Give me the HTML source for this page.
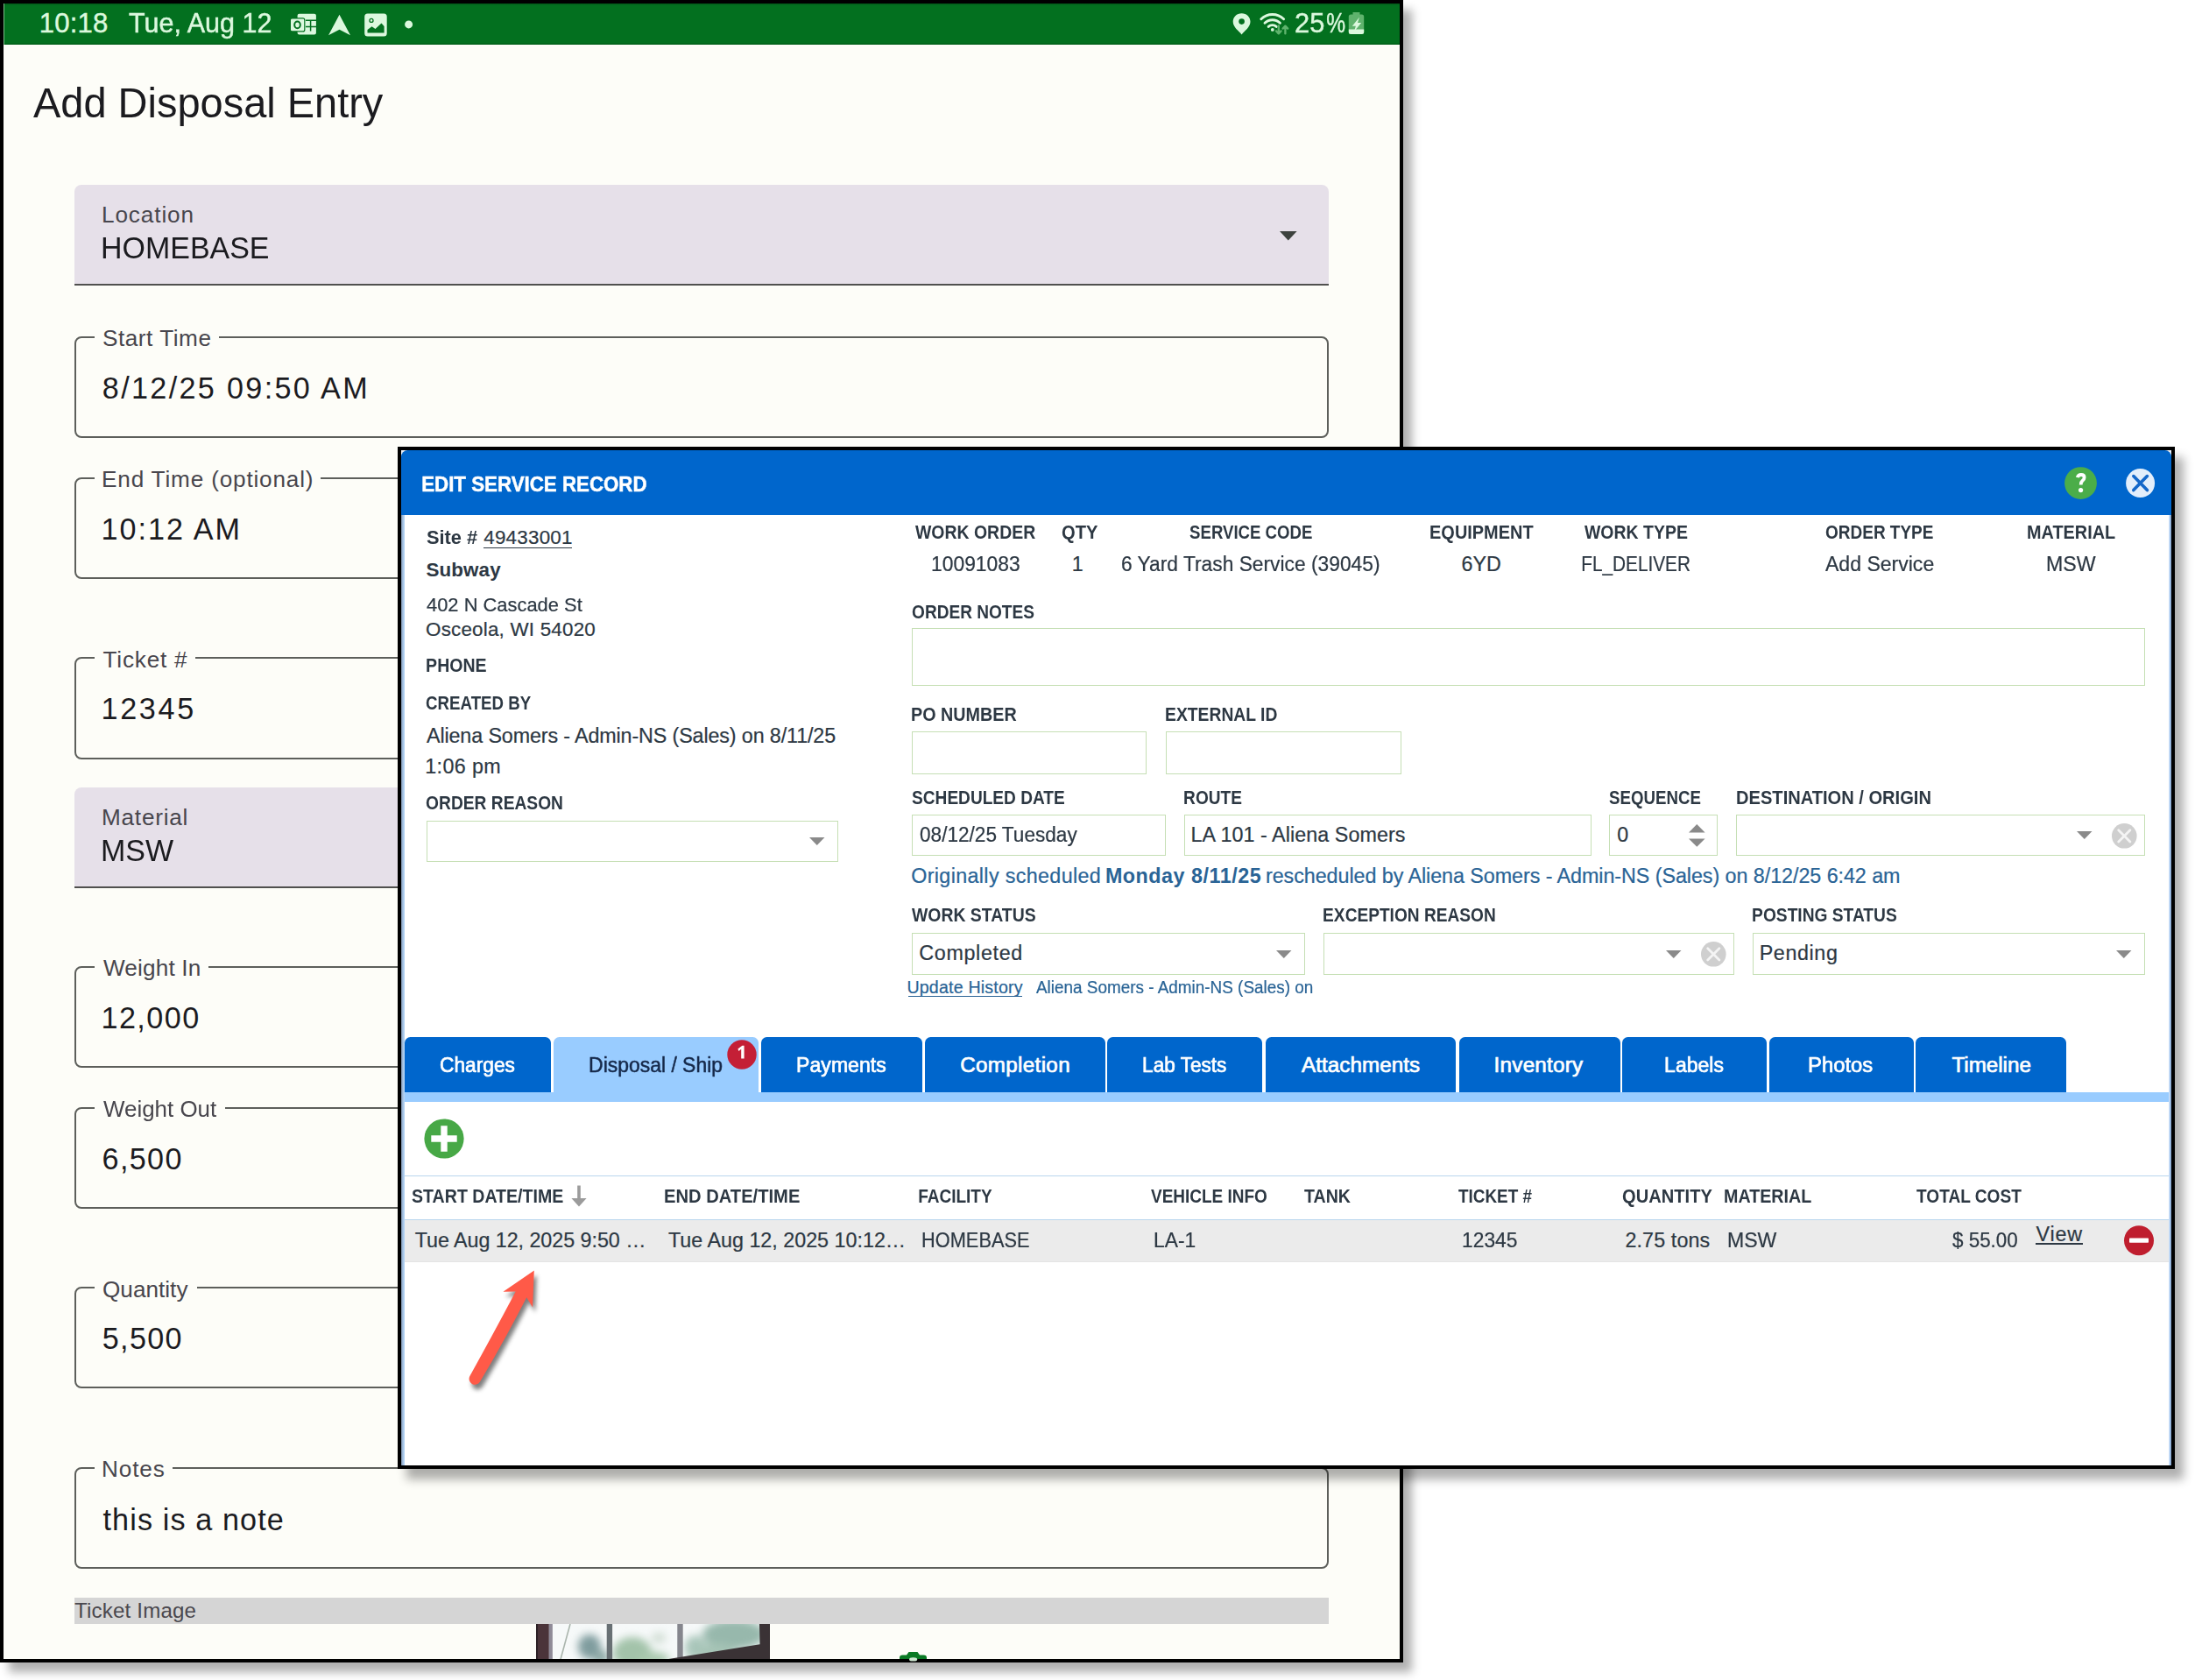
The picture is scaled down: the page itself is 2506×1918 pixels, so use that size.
<!DOCTYPE html>
<html><head><meta charset="utf-8"><title>Edit Service Record</title>
<style>
html,body{margin:0;padding:0;}
body{width:2506px;height:1918px;position:relative;overflow:hidden;background:#fff;font-family:"Liberation Sans",sans-serif;}
.t{position:absolute;white-space:nowrap;line-height:1;margin:0;padding:0;}
.b{position:absolute;box-sizing:border-box;}
svg{position:absolute;overflow:visible;}
#phone{position:absolute;left:0;top:0;width:1602px;height:1898px;box-sizing:border-box;border:4px solid #000;background:#fdfdf8;box-shadow:10px 11px 10px rgba(0,0,0,.315);}
#dlg{position:absolute;left:454px;top:510px;width:2029px;height:1167px;box-sizing:border-box;border:4px solid #000;background:#fff;box-shadow:10px 12px 10.5px rgba(0,0,0,.315);}
.ob{position:absolute;box-sizing:border-box;border:2px solid #5d5f5b;border-radius:8px;}
.gap{position:absolute;background:#fdfdf8;height:6px;}
.fb{position:absolute;box-sizing:border-box;background:#e6e0e9;border-radius:8px 8px 0 0;border-bottom:2px solid #50504e;}
.in{position:absolute;box-sizing:border-box;border:1.5px solid #c5dfb4;background:#fff;}
.tab{position:absolute;top:1183.5px;height:63.5px;background:#0066cc;border-radius:6.5px 6.5px 0 0;}

</style></head>
<body>
<div id="phone"></div>
<div class="b" style="left:4.0px;top:4.0px;width:1594.0px;height:46.7px;background:linear-gradient(#02591a,#03701f 2.5px,#03701f 44.5px,#025c18);border-left:1px solid #7dbd8a;"></div>
<div class="t" style="left:44.8px;top:11.4px;font-size:31.11px;letter-spacing:0.15px;color:#dcf8de;-webkit-text-stroke:0.45px currentColor;">10:18</div>
<div class="t" style="left:147.1px;top:11.4px;font-size:31.11px;transform:scaleX(0.9805);transform-origin:0.5px 0;color:#dcf8de;-webkit-text-stroke:0.45px currentColor;">Tue, Aug 12</div>
<div class="t" style="left:1478.2px;top:11.0px;font-size:31.54px;transform:scaleX(0.9767);transform-origin:1.5px 0;color:#dcf8de;-webkit-text-stroke:0.45px currentColor;">25</div>
<div class="t" style="left:1514.3px;top:11.0px;font-size:31.54px;color:#dcf8de;-webkit-text-stroke:0.45px currentColor;transform:scaleX(.78);transform-origin:1.5px 0;">%</div>
<svg width="2506" height="60" style="left:0;top:0" viewBox="0 0 2506 60">
<g fill="#dcf8de">
<!-- outlook -->
<rect x="339.6" y="15.8" width="21.3" height="23.7" rx="2"/>
<rect x="331.4" y="20.9" width="16.4" height="15" rx="2" stroke="#03701f" stroke-width="1.2"/>
<ellipse cx="339.5" cy="28.4" rx="3.3" ry="3.8" fill="none" stroke="#03701f" stroke-width="2"/>
<path d="M349 23.2H361M349 30.5H361M354.6 23.2V35.5" stroke="#03701f" stroke-width="1.5" fill="none"/>
<!-- nav arrow -->
<path d="M387.5 16.8L400 40.2L387.5 33.8L375 40.2Z"/>
<!-- image icon -->
<rect x="416.2" y="15.4" width="25.5" height="26" rx="3.5"/>
<path d="M419.5 37.6L419.5 34L424.5 30.2L428.5 33L435.5 26.6L438.6 30V37.6Z" fill="#03701f"/>
<circle cx="424" cy="23.4" r="2" fill="none" stroke="#03701f" stroke-width="1.3"/>
<circle cx="466.6" cy="27.9" r="4.5"/>
<!-- location pin -->
<path d="M1417.6 15.2c-5.6 0-9.9 4.2-9.9 9.6c0 6.2 6.6 10.6 9.9 14.6c3.3-4 9.9-8.4 9.9-14.6c0-5.4-4.3-9.6-9.9-9.6z"/>
<circle cx="1417.6" cy="24.6" r="3.3" fill="#03701f"/>
<!-- wifi -->
<g fill="none" stroke="#dcf8de" stroke-width="2.9" stroke-linecap="round">
<path d="M1439.8 21.8a18.5 18.5 0 0 1 25.8 0"/>
<path d="M1444 26.2a12.5 12.5 0 0 1 17.4 0"/>
<path d="M1448.2 30.4a6.6 6.6 0 0 1 9 0"/>
</g>
<circle cx="1452.8" cy="33.9" r="1.9"/>
<g fill="none" stroke="#5fb36d" stroke-width="2.3" stroke-linecap="round" stroke-linejoin="round">
<path d="M1459.8 29.5v8.5M1457 35.4l2.8 3l2.8-3"/>
<path d="M1467.4 38.4v-8.6M1464.6 32.6l2.8-3l2.8 3"/>
</g>
<!-- battery -->
<path d="M1544.5 14h8v2.6h2.2a2.5 2.5 0 0 1 2.5 2.5V36.6a2.5 2.5 0 0 1-2.5 2.5h-12.4a2.5 2.5 0 0 1-2.5-2.5V19.1a2.5 2.5 0 0 1 2.5-2.5h2.2z" fill="#5fb36d"/>
<path d="M1539.8 33.4h17.4v3.2a2.5 2.5 0 0 1-2.5 2.5h-12.4a2.5 2.5 0 0 1-2.5-2.5z"/>
<path d="M1552 19.8L1543.8 29.8H1547.9L1545.8 36.2L1554.2 26H1550Z"/>
</g></svg>
<div class="t" style="left:38.0px;top:92.9px;font-size:48.55px;transform:scaleX(0.9673);transform-origin:0.0px 0;color:#1b1b1f;">Add Disposal Entry</div>
<div class="fb" style="left:85px;top:211.0px;width:1432.4px;height:115.3px"></div>
<div class="t" style="left:116.0px;top:232.4px;font-size:26.16px;letter-spacing:0.88px;color:#48464d;">Location</div>
<div class="t" style="left:115.2px;top:266.4px;font-size:34.16px;transform:scaleX(0.9942);transform-origin:2.8px 0;color:#1b1b1f;">HOMEBASE</div>
<svg width="20" height="11" style="left:1460.6px;top:263.8px" viewBox="0 0 20 11"><path d="M0 0H19.6L9.8 10.4Z" fill="#3d423e"/></svg>
<div class="ob" style="left:85px;top:383.7px;width:1432.4px;height:116.4px"></div>
<div class="gap" style="left:108px;top:381.7px;width:141.8px"></div>
<div class="t" style="left:117.0px;top:373.3px;font-size:26.16px;letter-spacing:0.53px;color:#48464d;">Start Time</div>
<div class="t" style="left:116.8px;top:425.8px;font-size:34.16px;letter-spacing:2.34px;color:#1b1b1f;">8/12/25 09:50 AM</div>
<div class="ob" style="left:85px;top:544.8px;width:1432.4px;height:116.4px"></div>
<div class="gap" style="left:108px;top:542.8px;width:258.3px"></div>
<div class="t" style="left:116.0px;top:534.4px;font-size:26.16px;letter-spacing:0.82px;color:#48464d;">End Time (optional)</div>
<div class="t" style="left:115.5px;top:586.9px;font-size:34.16px;letter-spacing:2.03px;color:#1b1b1f;">10:12 AM</div>
<div class="ob" style="left:85px;top:750.2px;width:1432.4px;height:116.4px"></div>
<div class="gap" style="left:108px;top:748.2px;width:115.3px"></div>
<div class="t" style="left:117.5px;top:739.8px;font-size:26.16px;letter-spacing:0.79px;color:#48464d;">Ticket #</div>
<div class="t" style="left:115.5px;top:792.3px;font-size:34.16px;letter-spacing:2.67px;color:#1b1b1f;">12345</div>
<div class="fb" style="left:85px;top:898.6px;width:1432.4px;height:115.3px"></div>
<div class="t" style="left:116.0px;top:920.0px;font-size:26.16px;letter-spacing:0.76px;color:#48464d;">Material</div>
<div class="t" style="left:115.2px;top:954.0px;font-size:34.16px;transform:scaleX(0.9963);transform-origin:2.8px 0;color:#1b1b1f;">MSW</div>
<div class="ob" style="left:85px;top:1102.7px;width:1432.4px;height:116.4px"></div>
<div class="gap" style="left:108px;top:1100.7px;width:129.5px"></div>
<div class="t" style="left:118.0px;top:1092.3px;font-size:26.16px;letter-spacing:0.16px;color:#48464d;">Weight In</div>
<div class="t" style="left:115.5px;top:1144.8px;font-size:34.16px;letter-spacing:1.44px;color:#1b1b1f;">12,000</div>
<div class="ob" style="left:85px;top:1263.6px;width:1432.4px;height:116.4px"></div>
<div class="gap" style="left:108px;top:1261.6px;width:149.1px"></div>
<div class="t" style="left:118.0px;top:1253.2px;font-size:26.16px;transform:scaleX(0.9912);transform-origin:0.0px 0;color:#48464d;">Weight Out</div>
<div class="t" style="left:116.5px;top:1305.7px;font-size:34.16px;letter-spacing:1.38px;color:#1b1b1f;">6,500</div>
<div class="ob" style="left:85px;top:1469.1px;width:1432.4px;height:116.4px"></div>
<div class="gap" style="left:108px;top:1467.1px;width:116.6px"></div>
<div class="t" style="left:117.0px;top:1458.7px;font-size:26.16px;letter-spacing:0.01px;color:#48464d;">Quantity</div>
<div class="t" style="left:116.8px;top:1511.2px;font-size:34.16px;letter-spacing:1.31px;color:#1b1b1f;">5,500</div>
<div class="ob" style="left:85px;top:1674.7px;width:1432.4px;height:116.4px"></div>
<div class="gap" style="left:108px;top:1672.7px;width:88.7px"></div>
<div class="t" style="left:116.0px;top:1664.3px;font-size:26.16px;letter-spacing:0.86px;color:#48464d;">Notes</div>
<div class="t" style="left:117.5px;top:1717.9px;font-size:34.16px;letter-spacing:1.12px;color:#1b1b1f;">this is a note</div>
<div class="b" style="left:85.0px;top:1823.5px;width:1432.4px;height:30.1px;background:#d5d5d5;"></div>
<div class="t" style="left:85.0px;top:1826.8px;font-size:24.13px;letter-spacing:0.16px;color:#4a484e;">Ticket Image</div>
<svg width="267.2" height="40.2" style="left:611.6px;top:1853.7px;overflow:hidden" viewBox="0 0 267.2 40.2">

<g>
<rect width="267.2" height="40.2" fill="#f6f9f9"/>
<g style="filter:blur(4.6px)">
<ellipse cx="61" cy="26" rx="13" ry="14" fill="#7f9c9e"/>
<ellipse cx="74" cy="38" rx="9" ry="8" fill="#8ba7a4"/>
<ellipse cx="110" cy="33" rx="22" ry="18" fill="#a3c3aa"/>
<ellipse cx="134" cy="40" rx="18" ry="8" fill="#a9c8ae"/>
<ellipse cx="140" cy="16" rx="8" ry="6" fill="#cfdcd2"/>
<ellipse cx="182" cy="27" rx="12" ry="14" fill="#a9c6ba"/>
<ellipse cx="226" cy="12" rx="36" ry="17" fill="#97b8ac"/>
<ellipse cx="206" cy="32" rx="22" ry="10" fill="#a6c4b6"/>
</g>
<g style="filter:blur(.7px)">
<path d="M39 0L28 40.2" stroke="#aab5ad" stroke-width="1.6" fill="none"/>
<rect x="80.7" y="0" width="6.4" height="40.2" fill="#687074"/>
<rect x="161.3" y="0" width="6.4" height="40.2" fill="#85868d"/>
<rect x="14.2" y="0" width="4.6" height="40.2" fill="#8e8a97"/>
<rect x="0" y="0" width="14.6" height="40.2" fill="#4b343a"/>
<rect x="0" y="0" width="2" height="40.2" fill="#2d2227"/>
<path d="M149.7 40.2L255.6 23.3L255 0L267.2 0L267.2 40.2Z" fill="#3a3235"/>
</g>
</g></svg>
<svg width="32" height="8" style="left:1026.6px;top:1886px" viewBox="0 0 32 8"><path d="M0 8V6.5Q0 3.5 3.5 3.5H8L10.5 0H20.5L23 3.5H27.5Q31 3.5 31 6.5V8Z" fill="#0a7a24"/><ellipse cx="15.6" cy="8.4" rx="4.6" ry="2.2" fill="#cfe8d2"/></svg>
<div id="dlg"></div>
<div class="b" style="left:458.0px;top:587.8px;width:4.4px;height:1085.2px;background:linear-gradient(90deg,#74889f,#9cb4d2 35%,#abcdf0 70%,#b9d6f4);"></div>
<div class="b" style="left:2475.8px;top:587.8px;width:3.2px;height:1085.2px;background:linear-gradient(90deg,#e6f0fc,#b0d0f5 40%,#8fb0da 75%,#6f87a6);"></div>
<div class="b" style="left:458.0px;top:514.0px;width:2021.0px;height:8.0px;background:#eef3fb;"></div>
<div class="b" style="left:458.0px;top:514.0px;width:2021.0px;height:73.8px;background:#0066cc;border-radius:7.5px 7.5px 0 0;"></div>
<div class="t" style="left:480.7px;top:540.9px;font-size:24.71px;transform:scaleX(0.9031);transform-origin:1.5px 0;font-weight:bold;color:#fff;-webkit-text-stroke:0.5px currentColor;">EDIT SERVICE RECORD</div>
<svg width="120" height="44" style="left:2352px;top:530px" viewBox="2352 530 120 44">
<circle cx="2375.5" cy="551.6" r="18.4" fill="#4bad49"/>
<path d="M2371.8 545.2q.7-3.2 4.2-3.2q3.6 0 3.6 3.2q0 2-2 3.6q-1.9 1.5-1.9 4.6" fill="none" stroke="#fff" stroke-width="3.8" stroke-linecap="butt"/>
<circle cx="2375.6" cy="559.6" r="2.6" fill="#fff"/>
<circle cx="2443.6" cy="551.6" r="16.5" fill="#e3eefb"/>
<path d="M2435.8 543.6l15.6 16M2451.4 543.6l-15.6 16" stroke="#1467c9" stroke-width="3.6" stroke-linecap="round"/>
</svg>
<div class="t" style="left:486.5px;top:603.1px;font-size:22.4px;transform:scaleX(0.9738);transform-origin:0.5px 0;font-weight:bold;color:#2d3843;">Site #</div>
<div class="t" style="left:552.2px;top:603.1px;font-size:22.4px;letter-spacing:0.24px;color:#2d3843;-webkit-text-stroke:0.22px currentColor;">49433001</div>
<div class="b" style="left:552.3px;top:624.6px;width:101.0px;height:1.6px;background:#2d3843;"></div>
<div class="t" style="left:486.5px;top:640.2px;font-size:22.4px;letter-spacing:0.10px;font-weight:bold;color:#2d3843;">Subway</div>
<div class="t" style="left:486.5px;top:680.1px;font-size:22.4px;transform:scaleX(0.9780);transform-origin:0.5px 0;color:#2d3843;-webkit-text-stroke:0.22px currentColor;">402 N Cascade St</div>
<div class="t" style="left:486.0px;top:707.6px;font-size:22.4px;letter-spacing:0.21px;color:#2d3843;-webkit-text-stroke:0.22px currentColor;">Osceola, WI 54020</div>
<div class="t" style="left:485.8px;top:749.5px;font-size:21.3px;transform:scaleX(0.9180);transform-origin:1.2px 0;font-weight:bold;color:#2d3843;">PHONE</div>
<div class="t" style="left:486.2px;top:792.6px;font-size:21.3px;transform:scaleX(0.8773);transform-origin:0.8px 0;font-weight:bold;color:#2d3843;">CREATED BY</div>
<div class="t" style="left:487.0px;top:828.7px;font-size:23.3px;letter-spacing:-0.12px;color:#2d3843;-webkit-text-stroke:0.22px currentColor;">Aliena Somers - Admin-NS (Sales) on 8/11/25</div>
<div class="t" style="left:485.2px;top:864.3px;font-size:23.3px;letter-spacing:0.38px;color:#2d3843;-webkit-text-stroke:0.22px currentColor;">1:06 pm</div>
<div class="t" style="left:486.2px;top:906.6px;font-size:21.3px;transform:scaleX(0.9020);transform-origin:0.8px 0;font-weight:bold;color:#2d3843;">ORDER REASON</div>
<div class="in" style="left:486.6px;top:936.6px;width:470.4px;height:47.2px"></div>
<svg width="17.5" height="9" style="left:924.0px;top:955.9px" viewBox="0 0 17.5 9"><path d="M0 0H17.5L8.75 9Z" fill="#8a8a8a"/></svg>
<div class="t" style="left:1045.3px;top:598.1px;font-size:21.3px;transform:scaleX(0.9130);transform-origin:0.0px 0;font-weight:bold;color:#2d3843;">WORK ORDER</div>
<div class="t" style="left:1062.8px;top:632.5px;font-size:23.3px;transform:scaleX(0.9806);transform-origin:1.8px 0;color:#2d3843;-webkit-text-stroke:0.22px currentColor;">10091083</div>
<div class="t" style="left:1211.5px;top:598.1px;font-size:21.3px;transform:scaleX(0.9450);transform-origin:0.8px 0;font-weight:bold;color:#2d3843;">QTY</div>
<div class="t" style="left:1223.8px;top:632.5px;font-size:23.3px;color:#2d3843;-webkit-text-stroke:0.22px currentColor;">1</div>
<div class="t" style="left:1357.6px;top:598.1px;font-size:21.3px;transform:scaleX(0.8736);transform-origin:0.5px 0;font-weight:bold;color:#2d3843;">SERVICE CODE</div>
<div class="t" style="left:1280.3px;top:632.5px;font-size:23.3px;transform:scaleX(0.9778);transform-origin:1.0px 0;color:#2d3843;-webkit-text-stroke:0.22px currentColor;">6 Yard Trash Service (39045)</div>
<div class="t" style="left:1631.7px;top:598.1px;font-size:21.3px;transform:scaleX(0.9360);transform-origin:1.2px 0;font-weight:bold;color:#2d3843;">EQUIPMENT</div>
<div class="t" style="left:1668.6px;top:632.5px;font-size:23.3px;letter-spacing:-0.02px;color:#2d3843;-webkit-text-stroke:0.22px currentColor;">6YD</div>
<div class="t" style="left:1809.1px;top:598.1px;font-size:21.3px;transform:scaleX(0.9141);transform-origin:0.0px 0;font-weight:bold;color:#2d3843;">WORK TYPE</div>
<div class="t" style="left:1805.0px;top:632.5px;font-size:23.3px;transform:scaleX(0.8921);transform-origin:1.8px 0;color:#2d3843;-webkit-text-stroke:0.22px currentColor;">FL_DELIVER</div>
<div class="t" style="left:2083.8px;top:598.1px;font-size:21.3px;transform:scaleX(0.8907);transform-origin:0.8px 0;font-weight:bold;color:#2d3843;">ORDER TYPE</div>
<div class="t" style="left:2083.9px;top:632.5px;font-size:23.3px;transform:scaleX(0.9888);transform-origin:0.0px 0;color:#2d3843;-webkit-text-stroke:0.22px currentColor;">Add Service</div>
<div class="t" style="left:2313.8px;top:598.1px;font-size:21.3px;transform:scaleX(0.9315);transform-origin:1.2px 0;font-weight:bold;color:#2d3843;">MATERIAL</div>
<div class="t" style="left:2335.7px;top:632.5px;font-size:23.3px;transform:scaleX(0.9937);transform-origin:1.8px 0;color:#2d3843;-webkit-text-stroke:0.22px currentColor;">MSW</div>
<div class="t" style="left:1040.5px;top:688.5px;font-size:21.3px;transform:scaleX(0.8951);transform-origin:0.8px 0;font-weight:bold;color:#2d3843;">ORDER NOTES</div>
<div class="in" style="left:1040.8px;top:716.8px;width:1408.2px;height:66.2px"></div>
<div class="t" style="left:1040.0px;top:805.8px;font-size:21.3px;transform:scaleX(0.9263);transform-origin:1.2px 0;font-weight:bold;color:#2d3843;">PO NUMBER</div>
<div class="t" style="left:1330.0px;top:805.8px;font-size:21.3px;transform:scaleX(0.9056);transform-origin:1.2px 0;font-weight:bold;color:#2d3843;">EXTERNAL ID</div>
<div class="in" style="left:1040.8px;top:834.8px;width:268.6px;height:49.3px"></div>
<div class="in" style="left:1330.8px;top:834.8px;width:268.8px;height:49.3px"></div>
<div class="t" style="left:1040.7px;top:900.9px;font-size:21.3px;transform:scaleX(0.8968);transform-origin:0.5px 0;font-weight:bold;color:#2d3843;">SCHEDULED DATE</div>
<div class="t" style="left:1350.8px;top:900.9px;font-size:21.3px;transform:scaleX(0.8966);transform-origin:1.2px 0;font-weight:bold;color:#2d3843;">ROUTE</div>
<div class="t" style="left:1837.3px;top:900.9px;font-size:21.3px;transform:scaleX(0.8771);transform-origin:0.5px 0;font-weight:bold;color:#2d3843;">SEQUENCE</div>
<div class="t" style="left:1981.5px;top:900.9px;font-size:21.3px;transform:scaleX(0.9433);transform-origin:1.2px 0;font-weight:bold;color:#2d3843;">DESTINATION / ORIGIN</div>
<div class="in" style="left:1040.8px;top:930.2px;width:290.1px;height:47.3px"></div>
<div class="in" style="left:1351.6px;top:930.2px;width:465.3px;height:47.3px"></div>
<div class="in" style="left:1837.4px;top:930.2px;width:123.8px;height:47.3px"></div>
<div class="in" style="left:1982.3px;top:930.2px;width:466.7px;height:47.3px"></div>
<div class="t" style="left:1049.5px;top:942.0px;font-size:23.3px;transform:scaleX(0.9699);transform-origin:0.8px 0;color:#2d3843;-webkit-text-stroke:0.22px currentColor;">08/12/25 Tuesday</div>
<div class="t" style="left:1359.5px;top:942.0px;font-size:23.3px;letter-spacing:0.07px;color:#2d3843;-webkit-text-stroke:0.22px currentColor;">LA 101 - Aliena Somers</div>
<div class="t" style="left:1846.2px;top:942.0px;font-size:23.3px;color:#2d3843;-webkit-text-stroke:0.22px currentColor;">0</div>
<svg width="19" height="26" style="left:1927.8px;top:940.6px" viewBox="0 0 19 26"><path d="M0 9.4H18.6L9.3 0Z" fill="#8a8a8a"/><path d="M0 16.4H18.6L9.3 25.8Z" fill="#8a8a8a"/></svg>
<svg width="17.5" height="9" style="left:2370.8px;top:949.1px" viewBox="0 0 17.5 9"><path d="M0 0H17.5L8.75 9Z" fill="#8a8a8a"/></svg>
<svg width="28.6" height="28.6" style="left:2410.7px;top:939.5px" viewBox="-14.3 -14.3 28.6 28.6"><circle r="14.3" fill="#cfcfcf"/><path d="M-6.6 -6.6L6.6 6.6M6.6 -6.6L-6.6 6.6" stroke="#f4f4f4" stroke-width="2.8" stroke-linecap="round"/></svg>
<div class="t" style="left:1040.2px;top:989.2px;font-size:23.3px;letter-spacing:0.36px;color:#2a6496;-webkit-text-stroke:0.22px currentColor;">Originally scheduled</div>
<div class="t" style="left:1261.9px;top:989.2px;font-size:23.3px;letter-spacing:0.53px;font-weight:bold;color:#2a6496;">Monday 8/11/25</div>
<div class="t" style="left:1445.0px;top:989.2px;font-size:23.3px;letter-spacing:-0.05px;color:#2a6496;-webkit-text-stroke:0.22px currentColor;">rescheduled by Aliena Somers - Admin-NS (Sales) on 8/12/25 6:42 am</div>
<div class="t" style="left:1041.2px;top:1035.4px;font-size:21.3px;transform:scaleX(0.9115);transform-origin:0.0px 0;font-weight:bold;color:#2d3843;">WORK STATUS</div>
<div class="t" style="left:1510.0px;top:1035.4px;font-size:21.3px;transform:scaleX(0.8977);transform-origin:1.2px 0;font-weight:bold;color:#2d3843;">EXCEPTION REASON</div>
<div class="t" style="left:2000.0px;top:1035.4px;font-size:21.3px;transform:scaleX(0.9008);transform-origin:1.2px 0;font-weight:bold;color:#2d3843;">POSTING STATUS</div>
<div class="in" style="left:1040.8px;top:1065.0px;width:449.2px;height:47.7px"></div>
<div class="in" style="left:1510.8px;top:1065.0px;width:469.6px;height:47.7px"></div>
<div class="in" style="left:2000.9px;top:1065.0px;width:448.1px;height:47.7px"></div>
<div class="t" style="left:1049.3px;top:1076.5px;font-size:23.3px;letter-spacing:0.66px;color:#2d3843;-webkit-text-stroke:0.22px currentColor;">Completed</div>
<div class="t" style="left:2008.7px;top:1076.5px;font-size:23.3px;letter-spacing:0.62px;color:#2d3843;-webkit-text-stroke:0.22px currentColor;">Pending</div>
<svg width="17.5" height="9" style="left:1457.2px;top:1084.5px" viewBox="0 0 17.5 9"><path d="M0 0H17.5L8.75 9Z" fill="#8a8a8a"/></svg>
<svg width="17.5" height="9" style="left:1902.2px;top:1084.5px" viewBox="0 0 17.5 9"><path d="M0 0H17.5L8.75 9Z" fill="#8a8a8a"/></svg>
<svg width="28.6" height="28.6" style="left:1942.1px;top:1074.5px" viewBox="-14.3 -14.3 28.6 28.6"><circle r="14.3" fill="#cfcfcf"/><path d="M-6.6 -6.6L6.6 6.6M6.6 -6.6L-6.6 6.6" stroke="#f4f4f4" stroke-width="2.8" stroke-linecap="round"/></svg>
<svg width="17.5" height="9" style="left:2416.2px;top:1084.5px" viewBox="0 0 17.5 9"><path d="M0 0H17.5L8.75 9Z" fill="#8a8a8a"/></svg>
<div class="t" style="left:1035.4px;top:1117.7px;font-size:19.6px;letter-spacing:0.20px;color:#2a6496;-webkit-text-stroke:0.22px currentColor;">Update History</div>
<div class="b" style="left:1036.5px;top:1136.6px;width:130.9px;height:1.4px;background:#2a6496;"></div>
<div class="t" style="left:1182.8px;top:1117.7px;font-size:19.6px;transform:scaleX(0.9649);transform-origin:0.0px 0;color:#2a6496;-webkit-text-stroke:0.22px currentColor;">Aliena Somers - Admin-NS (Sales) on</div>
<div class="b" style="left:462.2px;top:1246.8px;width:2013.4px;height:11.6px;background:#99ccff;"></div>
<div class="tab" style="left:462.2px;width:167.1px;"></div>
<div class="t" style="left:502.2px;top:1204.3px;font-size:24.2px;transform:scaleX(0.9393);transform-origin:1.0px 0;color:#fff;-webkit-text-stroke:0.7px currentColor;">Charges</div>
<div class="tab" style="left:632.0px;width:234.3px;background:#99ccff;"></div>
<div class="t" style="left:671.8px;top:1204.3px;font-size:24.2px;transform:scaleX(0.9478);transform-origin:1.8px 0;color:#16294a;-webkit-text-stroke:0.5px currentColor;">Disposal / Ship</div>
<div class="tab" style="left:869.0px;width:184.4px;"></div>
<div class="t" style="left:909.0px;top:1204.3px;font-size:24.2px;transform:scaleX(0.9549);transform-origin:1.8px 0;color:#fff;-webkit-text-stroke:0.7px currentColor;">Payments</div>
<div class="tab" style="left:1056.1px;width:205.5px;"></div>
<div class="t" style="left:1096.2px;top:1204.3px;font-size:24.2px;letter-spacing:0.34px;color:#fff;-webkit-text-stroke:0.7px currentColor;">Completion</div>
<div class="tab" style="left:1264.3px;width:177.0px;"></div>
<div class="t" style="left:1304.0px;top:1204.3px;font-size:24.2px;transform:scaleX(0.9340);transform-origin:1.8px 0;color:#fff;-webkit-text-stroke:0.7px currentColor;">Lab Tests</div>
<div class="tab" style="left:1445.3px;width:216.8px;"></div>
<div class="t" style="left:1486.1px;top:1204.3px;font-size:24.2px;letter-spacing:0.05px;color:#fff;-webkit-text-stroke:0.7px currentColor;">Attachments</div>
<div class="tab" style="left:1665.5px;width:184.3px;"></div>
<div class="t" style="left:1705.6px;top:1204.3px;font-size:24.2px;letter-spacing:0.26px;color:#fff;-webkit-text-stroke:0.7px currentColor;">Inventory</div>
<div class="tab" style="left:1852.3px;width:164.9px;"></div>
<div class="t" style="left:1900.2px;top:1204.3px;font-size:24.2px;transform:scaleX(0.9513);transform-origin:1.8px 0;color:#fff;-webkit-text-stroke:0.7px currentColor;">Labels</div>
<div class="tab" style="left:2019.5px;width:165.6px;"></div>
<div class="t" style="left:2064.2px;top:1204.3px;font-size:24.2px;transform:scaleX(0.9849);transform-origin:1.8px 0;color:#fff;-webkit-text-stroke:0.7px currentColor;">Photos</div>
<div class="tab" style="left:2186.7px;width:172.6px;"></div>
<div class="t" style="left:2228.4px;top:1204.3px;font-size:24.2px;color:#fff;-webkit-text-stroke:0.7px currentColor;">Timeline</div>
<svg width="34" height="34" style="left:829.9px;top:1186.9px" viewBox="0 0 34 34"><circle cx="17" cy="17" r="16.7" fill="#c41f36"/><path d="M12.4 10.6L17.4 6.8H19.6V21.4H16.2V10.8L13.4 12.9Z" fill="#fff"/></svg>
<svg width="46" height="46" style="left:484.4px;top:1276.6px" viewBox="0 0 46 46"><circle cx="23" cy="23" r="22.6" fill="#47a846"/><path d="M23 8.3V37.7M8.3 23H37.7" stroke="#fff" stroke-width="7.4"/></svg>
<div class="b" style="left:462.2px;top:1341.8px;width:2013.4px;height:1.2px;background:#b9d6ee;"></div>
<div class="b" style="left:462.2px;top:1392.0px;width:2013.4px;height:1.2px;background:#b9d6ee;"></div>
<div class="b" style="left:462.2px;top:1393.2px;width:2013.4px;height:47.4px;background:#ebebeb;"></div>
<div class="b" style="left:462.2px;top:1440.2px;width:2013.4px;height:0.8px;background:#e4e4e4;"></div>
<div class="t" style="left:469.7px;top:1356.4px;font-size:21.3px;transform:scaleX(0.9193);transform-origin:0.5px 0;font-weight:bold;color:#2d3843;">START DATE/TIME</div>
<div class="t" style="left:758.1px;top:1356.4px;font-size:21.3px;transform:scaleX(0.9465);transform-origin:1.2px 0;font-weight:bold;color:#2d3843;">END DATE/TIME</div>
<div class="t" style="left:1047.8px;top:1356.4px;font-size:21.3px;transform:scaleX(0.8925);transform-origin:1.2px 0;font-weight:bold;color:#2d3843;">FACILITY</div>
<div class="t" style="left:1313.8px;top:1356.4px;font-size:21.3px;transform:scaleX(0.8912);transform-origin:0.0px 0;font-weight:bold;color:#2d3843;">VEHICLE INFO</div>
<div class="t" style="left:1489.1px;top:1356.4px;font-size:21.3px;transform:scaleX(0.9188);transform-origin:0.0px 0;font-weight:bold;color:#2d3843;">TANK</div>
<div class="t" style="left:1664.5px;top:1356.4px;font-size:21.3px;transform:scaleX(0.8870);transform-origin:0.0px 0;font-weight:bold;color:#2d3843;">TICKET #</div>
<div class="t" style="left:1852.2px;top:1356.4px;font-size:21.3px;transform:scaleX(0.9448);transform-origin:0.8px 0;font-weight:bold;color:#2d3843;">QUANTITY</div>
<div class="t" style="left:1968.0px;top:1356.4px;font-size:21.3px;transform:scaleX(0.9239);transform-origin:1.2px 0;font-weight:bold;color:#2d3843;">MATERIAL</div>
<div class="t" style="left:2188.1px;top:1356.4px;font-size:21.3px;transform:scaleX(0.8966);transform-origin:0.0px 0;font-weight:bold;color:#2d3843;">TOTAL COST</div>
<svg width="20" height="26" style="left:651.3px;top:1352.8px" viewBox="0 0 20 26"><path d="M8.2 0.6H11.8V15H18.6L10 24.6L1.4 15H8.2Z" fill="#9b9b9b"/></svg>
<div class="t" style="left:473.7px;top:1404.6px;font-size:23.3px;letter-spacing:-0.04px;color:#2d3843;-webkit-text-stroke:0.22px currentColor;">Tue Aug 12, 2025 9:50 …</div>
<div class="t" style="left:763.0px;top:1404.6px;font-size:23.3px;color:#2d3843;-webkit-text-stroke:0.22px currentColor;">Tue Aug 12, 2025 10:12…</div>
<div class="t" style="left:1051.7px;top:1404.6px;font-size:23.3px;transform:scaleX(0.9338);transform-origin:1.8px 0;color:#2d3843;-webkit-text-stroke:0.22px currentColor;">HOMEBASE</div>
<div class="t" style="left:1316.5px;top:1404.6px;font-size:23.3px;transform:scaleX(0.9785);transform-origin:1.8px 0;color:#2d3843;-webkit-text-stroke:0.22px currentColor;">LA-1</div>
<div class="t" style="left:1668.8px;top:1404.6px;font-size:23.3px;transform:scaleX(0.9790);transform-origin:1.8px 0;color:#2d3843;-webkit-text-stroke:0.22px currentColor;">12345</div>
<div class="t" style="left:1855.4px;top:1404.6px;font-size:23.3px;letter-spacing:0.12px;color:#2d3843;-webkit-text-stroke:0.22px currentColor;">2.75 tons</div>
<div class="t" style="left:1971.5px;top:1404.6px;font-size:23.3px;transform:scaleX(0.9900);transform-origin:1.8px 0;color:#2d3843;-webkit-text-stroke:0.22px currentColor;">MSW</div>
<div class="t" style="left:2228.7px;top:1404.6px;font-size:23.3px;transform:scaleX(0.9616);transform-origin:0.2px 0;color:#2d3843;-webkit-text-stroke:0.22px currentColor;">$ 55.00</div>
<div class="t" style="left:2324.6px;top:1398.3px;font-size:23.3px;letter-spacing:0.78px;color:#2d3843;-webkit-text-stroke:0.22px currentColor;">View</div>
<div class="b" style="left:2324.2px;top:1419.2px;width:53.4px;height:1.6px;background:#2d3843;"></div>
<svg width="36" height="36" style="left:2424px;top:1398.1px" viewBox="0 0 36 36"><circle cx="18" cy="18.2" r="17" fill="#bf1e2e"/><rect x="7" y="15.4" width="22" height="5.4" rx=".8" fill="#fff"/></svg>
<svg width="140" height="190" style="left:510px;top:1430px" viewBox="510 1430 140 190">

<g transform="translate(3,5.5)" style="filter:blur(2.8px)" opacity=".58"><path d="M609.8 1450.4L574.4 1474.8L588.7 1474.5Q562 1525 536.4 1570.9A6.7 6.7 0 0 0 548 1577.6Q575.4 1531.6 601.2 1481.3L608.1 1492.4Z" fill="#222"/></g>
<path d="M609.8 1450.4L574.4 1474.8L588.7 1474.5Q562 1525 536.4 1570.9A6.7 6.7 0 0 0 548 1577.6Q575.4 1531.6 601.2 1481.3L608.1 1492.4Z" fill="#ff5a48"/>
</svg>
</body></html>
